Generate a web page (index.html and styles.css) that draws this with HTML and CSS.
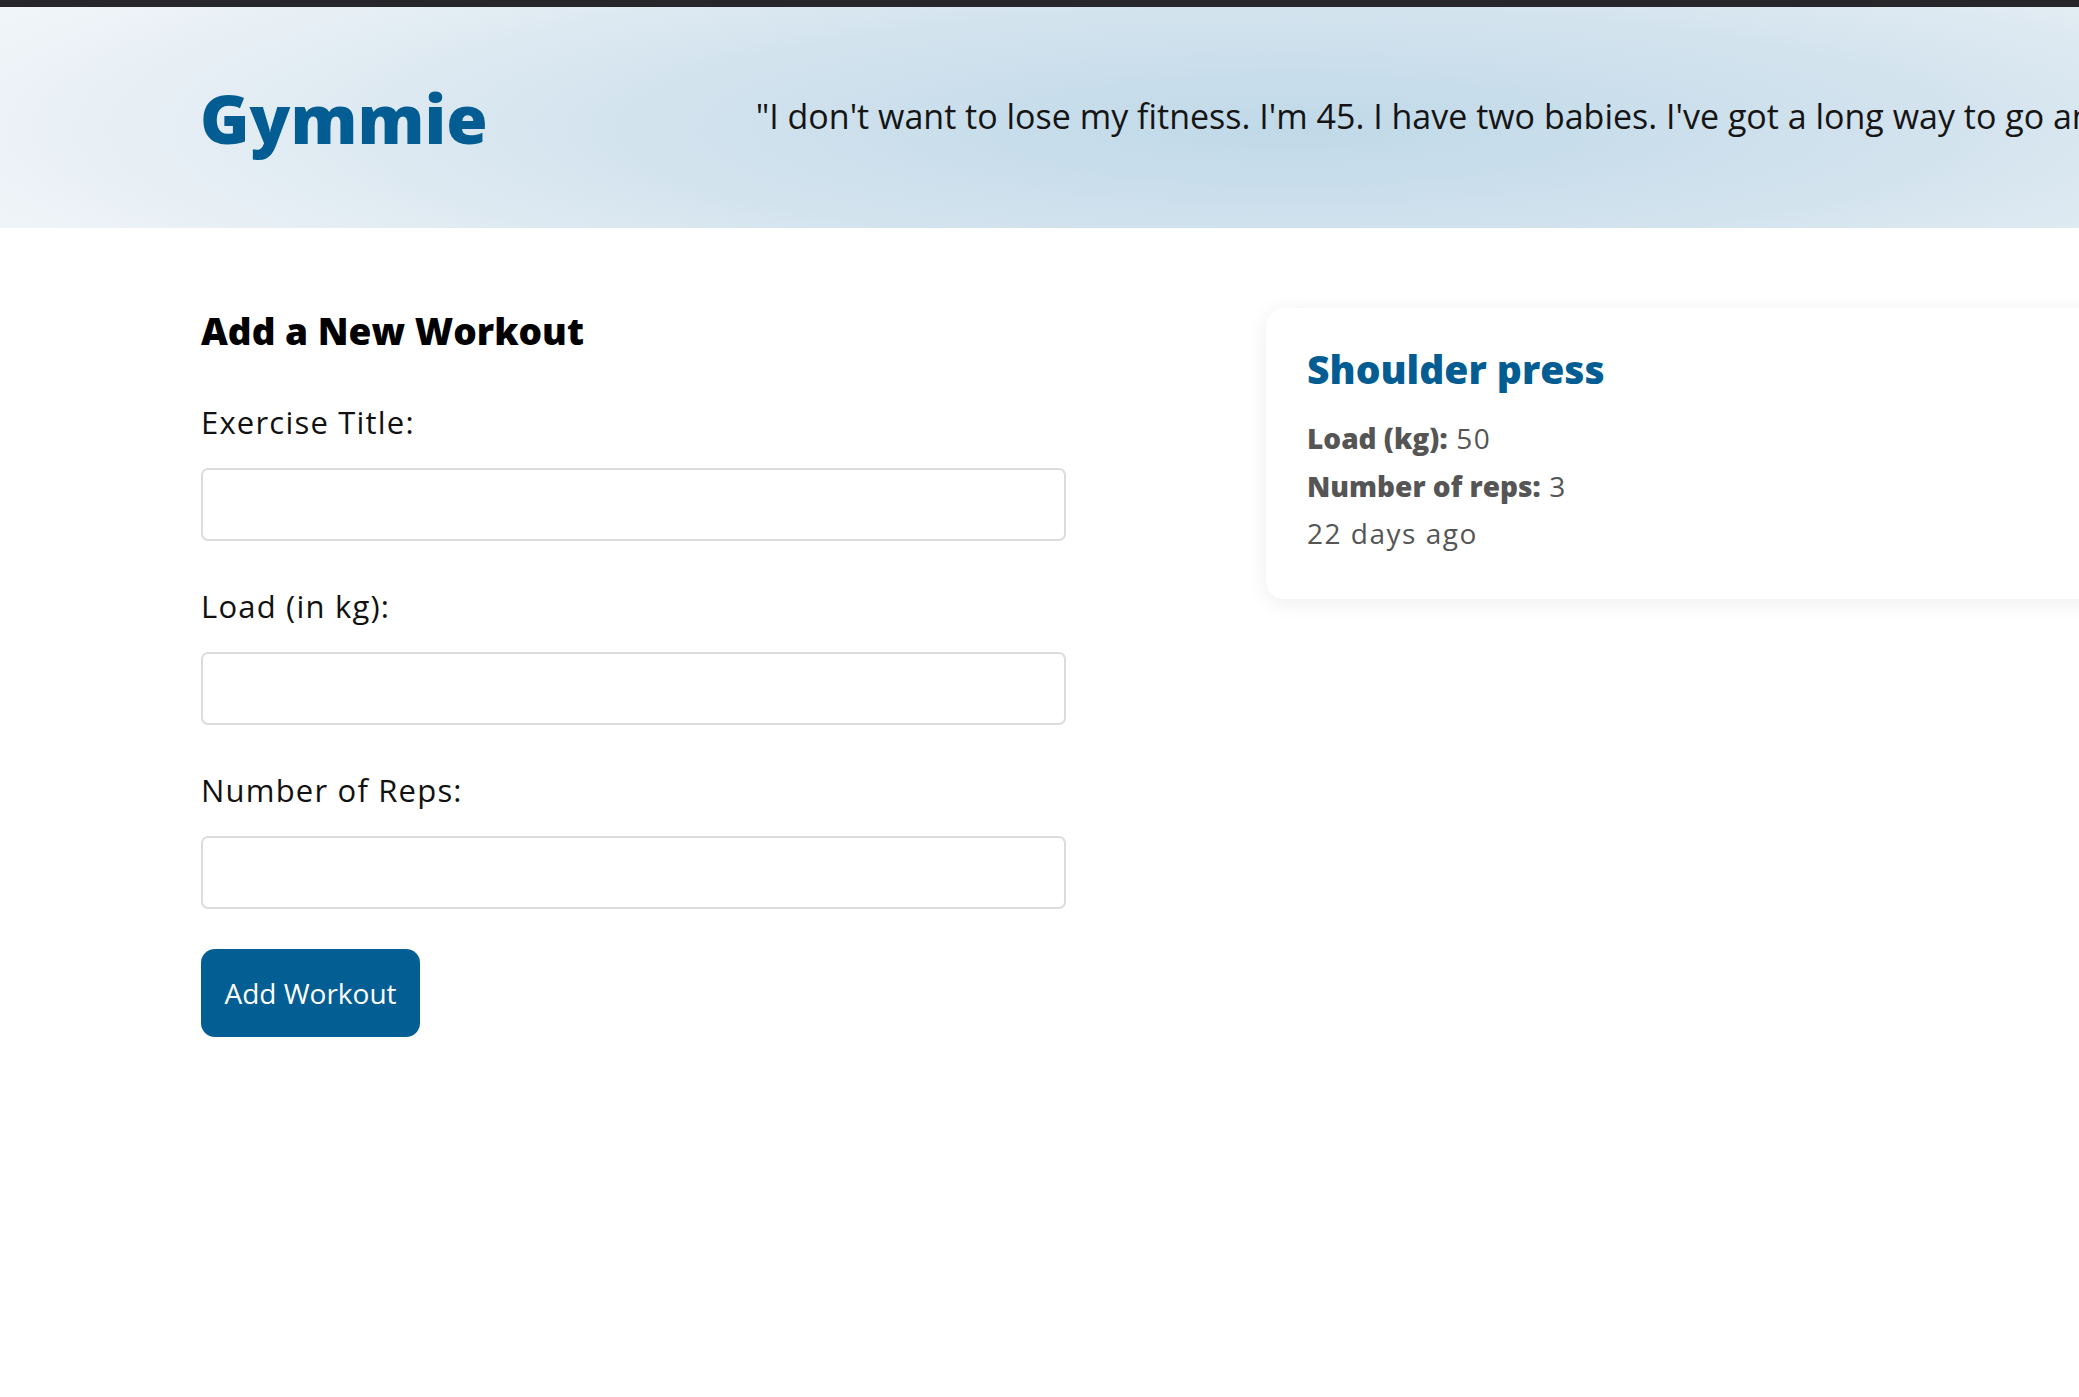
FILE: index.html
```html
<!DOCTYPE html>
<html lang="en">
<head>
<meta charset="utf-8">
<title>Gymmie</title>
<link rel="stylesheet" href="styles.css">
</head>
<body>
<div class="topbar"></div>
<header class="header">
  <h1 class="logo">Gymmie</h1>
  <p class="quote">"I don't want to lose my fitness. I'm 45. I have two babies. I've got a long way to go and I want to keep going."</p>
</header>
<main class="main">
  <form class="form">
    <h2 class="form-title">Add a New Workout</h2>
    <label class="field-label" for="title">Exercise Title:</label>
    <input class="field-input" id="title" type="text">
    <label class="field-label" for="load">Load (in kg):</label>
    <input class="field-input" id="load" type="number">
    <label class="field-label" for="reps">Number of Reps:</label>
    <input class="field-input" id="reps" type="number">
    <button class="btn" type="button">Add Workout</button>
  </form>
  <section class="workouts">
    <div class="card">
      <h3 class="card-title">Shoulder press</h3>
      <p class="card-row"><strong>Load (kg):</strong> 50</p>
      <p class="card-row"><strong>Number of reps:</strong> 3</p>
      <p class="card-row">22 days ago</p>
    </div>
  </section>
</main>
</body>
</html>
```

FILE: styles.css
```css
* { box-sizing: border-box; }

html, body {
  margin: 0;
  padding: 0;
  overflow: hidden;
  background: #ffffff;
  font-family: "Open Sans", "Noto Sans", sans-serif;
  color: #111;
}

.topbar {
  height: 7px;
  background: #27262b;
}

.header {
  height: 221px;
  display: flex;
  align-items: center;
  padding-left: 200px;
  white-space: nowrap;
  overflow: hidden;
  background:
    radial-gradient(ellipse 70% 120% at 62% 55%, #c0d9e8 0%, #d3e3ee 45%, #eaf1f6 85%, #f1f5f8 100%);
}

.logo {
  margin: 0;
  font-size: 67px;
  line-height: 80px;
  font-weight: 800;
  color: #035d93;
}

.quote {
  margin: 0 0 4px 268px;
  font-size: 34px;
  line-height: 44px;
  color: #151515;
}

.main {
  display: grid;
  grid-template-columns: 864px 864px;
  column-gap: 201px;
  padding: 80px 0 0 201px;
  align-items: start;
}

.form {
  display: flex;
  flex-direction: column;
  align-items: flex-start;
}

.form-title {
  margin: 0 0 48px;
  font-size: 37px;
  line-height: 46px;
  font-weight: 800;
  color: #000;
}

.field-label {
  font-size: 31px;
  line-height: 40px;
  letter-spacing: 1.2px;
  color: #111;
  margin-bottom: 26px;
}

.field-input {
  width: 865px;
  height: 73px;
  border: 2px solid #dcdcdc;
  border-radius: 7px;
  background: #fff;
  margin: 0 0 45px;
  font-size: 26px;
  padding: 0 16px;
}

.field-input:last-of-type { margin-bottom: 40px; }

.btn {
  width: 219px;
  height: 88px;
  border: none;
  border-radius: 14px;
  background: #035e93;
  color: #fff;
  font-family: inherit;
  font-size: 28px;
  padding: 0 18px;
  cursor: pointer;
}

.card {
  background: #fff;
  border-radius: 18px;
  box-shadow: 0 4px 22px rgba(0, 0, 0, 0.07);
  padding: 38px 41px 41px;
}

.card-title {
  margin: 0 0 23px;
  font-size: 39px;
  line-height: 46px;
  font-weight: 800;
  color: #035d93;
}

.card-row {
  margin: 0;
  font-size: 28px;
  line-height: 47.5px;
  letter-spacing: 1.5px;
  color: #555;
}

.card-row strong {
  font-weight: 800;
  letter-spacing: 0;
}
```
